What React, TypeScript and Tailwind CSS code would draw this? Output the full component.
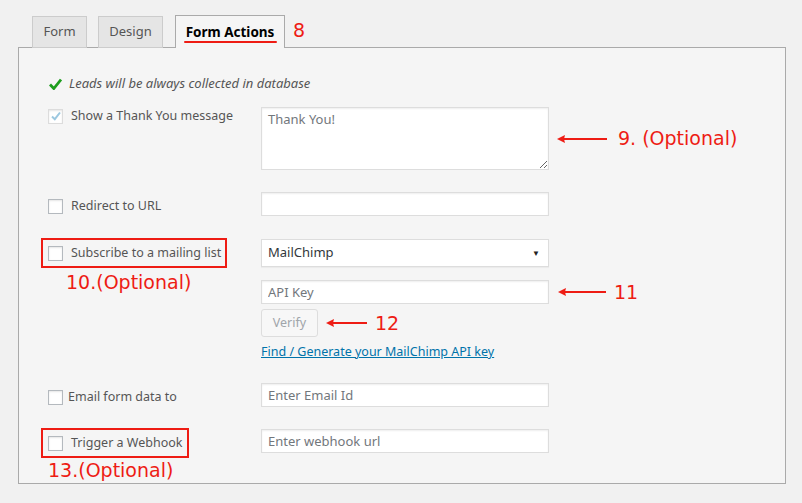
const ui = { fontFamily: '"Noto Sans", "Open Sans", sans-serif' };
const note = { fontFamily: '"DejaVu Sans", sans-serif' };

const Checkbox = ({ checked = false, faded = false }: { checked?: boolean; faded?: boolean }) => (
  <span
    className={`flex h-[15px] w-[15px] shrink-0 items-center justify-center border bg-white shadow-[inset_0_1px_2px_rgba(0,0,0,0.1)] ${
      faded ? "border-[#dcdcdc]" : "border-[#b4b9be]"
    }`}
  >
    {checked && (
      <svg width="12" height="12" viewBox="0 0 12 12">
        <path d="M2 6.5 L4.8 9.2 L10 2.5" fill="none" stroke="#9cc8e0" strokeWidth="2" />
      </svg>
    )}
  </span>
);

const Arrow = ({ w }: { w: number }) => (
  <svg width={w} height="10" viewBox={`0 0 ${w} 10`} className="block shrink-0">
    <path d={`M3 5 H${w}`} stroke="#ee1c14" strokeWidth="2" />
    <path d="M0 5 L8 1 L7 5 L8 9 Z" fill="#ee1c14" />
  </svg>
);

const inputCls =
  "h-[24px] w-[288px] border border-[#dddddd] bg-white px-[6px] text-[13px] text-[#32373c] shadow-[inset_0_1px_2px_rgba(0,0,0,0.07)] outline-none placeholder:text-[#72777c]";

export default function App() {
  return (
    <div className="min-h-screen bg-[#f1f1f1] pt-[15px]" style={ui}>
      <div className="relative z-10 -mb-px flex h-[33px] items-end pl-[32px]">
        <div className="flex h-[32px] w-[55px] items-center justify-center border border-[#cccccc] bg-[#e5e5e5] text-[13px] text-[#555]">
          Form
        </div>
        <div className="ml-[11px] flex h-[32px] w-[65px] items-center justify-center border border-[#cccccc] bg-[#e5e5e5] text-[13px] text-[#555]">
          Design
        </div>
        <div className="relative ml-[12px] flex h-[33px] w-[110px] items-center justify-center border border-b-0 border-[#aaaaaa] bg-[#f5f5f5] text-[13.5px] font-bold text-black">
          Form Actions
          <span className="absolute bottom-[5px] left-[8px] h-[2px] w-[93px] rounded-full bg-[#ee1c14]" />
        </div>
        <span className="mb-[2px] ml-[8px] self-center text-[19px] leading-none text-[#ee1c14]" style={note}>
          8
        </span>
      </div>

      <div className="ml-[18px] mr-[16px] h-[437px] border border-[#aaaaaa] bg-[#f5f5f5] pl-[29px] pt-[27px]">
        <div className="flex h-[18px] items-center text-[13px] italic text-[#555]">
          <svg width="13" height="12" viewBox="0 0 13 12" className="ml-[1px] mr-[7px]">
            <path d="M1 6.5 L4.8 10.5 L12 1.5" fill="none" stroke="#1e9e1e" strokeWidth="2.8" />
          </svg>
          Leads will be always collected in database
        </div>

        <div className="mt-[14px] flex items-start">
          <div className="flex h-[18px] w-[213px] items-center gap-[8px] whitespace-nowrap text-[12.5px] text-[#555]">
            <Checkbox checked faded />
            Show a Thank You message
          </div>
          <div className="flex items-center">
            <textarea
              placeholder="Thank You!"
              className="block h-[63px] w-[288px] border border-[#dddddd] bg-white px-[6px] py-[2px] text-[13px] shadow-[inset_0_1px_2px_rgba(0,0,0,0.07)] outline-none placeholder:text-[#72777c]"
            />
            <span className="ml-[8px]">
              <Arrow w={50} />
            </span>
            <span className="ml-[11px] text-[19px] leading-none text-[#ee1c14]" style={note}>
              9. (Optional)
            </span>
          </div>
        </div>

        <div className="mt-[22px] flex items-center">
          <div className="flex w-[213px] items-center gap-[8px] whitespace-nowrap pt-[4px] text-[12.5px] text-[#555]">
            <Checkbox />
            Redirect to URL
          </div>
          <input className={inputCls} />
        </div>

        <div className="mt-[23px] flex items-start">
          <div className="w-[213px]">
            <div className="-ml-[7px] -mt-px flex h-[30px] w-[186px] items-center gap-[8px] whitespace-nowrap border-2 border-[#ee1c14] pl-[5px] text-[12.5px] text-[#555]">
              <Checkbox />
              Subscribe to a mailing list
            </div>
            <div className="ml-[18px] mt-[3px] text-[19px] leading-[22px] text-[#ee1c14]" style={note}>
              10.(Optional)
            </div>
          </div>
          <div className="flex flex-col items-start">
            <div className="flex h-[28px] w-[288px] items-center justify-between border border-[#dddddd] bg-white pl-[6px] pr-[8px] text-[13px] text-[#32373c] shadow-[0_1px_1px_rgba(0,0,0,0.04)]">
              MailChimp
              <span className="text-[8px] leading-none text-[#222]">▼</span>
            </div>
            <div className="mt-[13px] flex items-center">
              <input placeholder="API Key" className={inputCls} />
              <span className="ml-[9px]">
                <Arrow w={48} />
              </span>
              <span className="ml-[8px] text-[19px] leading-none text-[#ee1c14]" style={note}>
                11
              </span>
            </div>
            <div className="mt-[5px] flex items-center">
              <button className="h-[28px] w-[57px] rounded-[3px] border border-[#dddddd] bg-[#f7f7f7] text-[12.5px] text-[#a0a5aa]">
                Verify
              </button>
              <span className="ml-[8px]">
                <Arrow w={41} />
              </span>
              <span className="ml-[8px] text-[19px] leading-none text-[#ee1c14]" style={note}>
                12
              </span>
            </div>
            <a className="mt-[6px] text-[12.5px] leading-[18px] text-[#0073aa] underline">
              Find / Generate your MailChimp API key
            </a>
          </div>
        </div>

        <div className="mt-[22px] flex items-center">
          <div className="flex w-[213px] items-center gap-[5px] whitespace-nowrap pt-[4px] text-[12.5px] text-[#555]">
            <Checkbox />
            Email form data to
          </div>
          <input placeholder="Enter Email Id" className={inputCls} />
        </div>

        <div className="mt-[22px] flex items-start">
          <div className="w-[213px]">
            <div className="-ml-[7px] -mt-px flex h-[30px] w-[148px] items-center gap-[8px] whitespace-nowrap border-2 border-[#ee1c14] pl-[5px] text-[12.5px] text-[#555]">
              <Checkbox />
              Trigger a Webhook
            </div>
            <div className="mt-[1px] text-[19px] leading-[22px] text-[#ee1c14]" style={note}>
              13.(Optional)
            </div>
          </div>
          <input placeholder="Enter webhook url" className={inputCls} />
        </div>
      </div>
    </div>
  );
}
